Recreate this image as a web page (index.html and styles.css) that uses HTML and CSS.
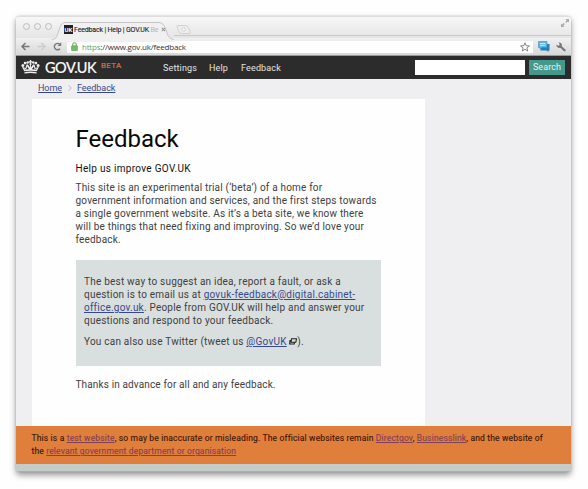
FILE: index.html
```html
<!DOCTYPE html>
<html lang="en">
<head>
<meta charset="utf-8">
<title>Feedback | Help | GOV.UK Beta</title>
<link rel="stylesheet" href="styles.css">
</head>
<body>
<div class="window">
  <div class="tabstrip">
    <div class="lights"><i></i><i></i><i></i></div>
    <div class="tab">
      <svg class="tab-shape" viewBox="0 0 126 20" width="126" height="20"><path d="M0 17.500C5 17 5 14 7 8C9 2 10 .5 14 .5H106C111 .5 112 3 114 8C116 14 117 17 122 17.500V20H0Z" fill="#f0f0f0"/><path d="M0 17.500C5 17 5 14 7 8C9 2 10 .5 14 .5H106C111 .5 112 3 114 8C116 14 117 17 122 17.500" fill="none" stroke="#c4c4c4"/></svg>
      <span class="favicon">UK</span>
      <span class="tab-title">Feedback | Help | GOV.UK <span class="faded">Be</span></span>
      <svg class="tab-close" viewBox="0 0 6 6" width="5" height="5"><path d="M1 1L5 5M5 1L1 5" stroke="#999" stroke-width="1.4"/></svg>
    </div>
    <svg class="newtab" viewBox="0 0 18 10" width="16" height="9"><path d="M1 1Q1 .5 2 .5H11Q13 .5 14 3L16 8Q16.500 9.500 15 9.500H6Q4 9.500 3 7Z" fill="#eee" stroke="#cdcdcd"/><path d="M8 2.800h1.500v1.500h1.500v1.500h-1.500v1.500h-1.500v-1.500h-1.500v-1.500h1.500z" fill="#fff" stroke="#c8c8c8" stroke-width=".6"/></svg>
    <svg class="expand" viewBox="0 0 8 8" width="8" height="8"><path d="M4.500 0H8V3.500L6.800 2.400L5.200 4L4.200 3L5.700 1.300ZM3.500 8H0V4.500L1.200 5.600L2.700 4L3.800 5L2.300 6.700Z" fill="#aaa"/></svg>
  </div>
  <div class="toolbar">
    <svg class="tool" viewBox="0 0 9 9" width="9" height="9"><path d="M8.500 4.500H1.500M4.500 1L1 4.500L4.500 8" fill="none" stroke="#777" stroke-width="1.500"/></svg>
    <svg class="tool" viewBox="0 0 9 9" width="9" height="9"><path d="M.5 4.500H7.500M4.500 1L8 4.500L4.500 8" fill="none" stroke="#ccc" stroke-width="1.500"/></svg>
    <svg class="tool" viewBox="0 0 9 9" width="9" height="9"><path d="M7 6.700A3.200 3.200 0 1 1 6.700 2.200" fill="none" stroke="#777" stroke-width="1.400"/><path d="M8.200 .3V4H4.500Z" fill="#777"/></svg>
    <div class="address">
      <svg class="lock" viewBox="0 0 7 9" width="7" height="9"><path d="M1.700 4V2.700a1.800 1.800 0 0 1 3.600 0V4" fill="none" stroke="#7fb476" stroke-width="1.200"/><rect x=".4" y="3.700" width="6.200" height="5" rx=".7" fill="#70bd65" stroke="#58a14f" stroke-width=".5"/></svg>
      <span class="url"><span class="scheme">https</span>://www.gov.uk/feedback</span>
      <svg class="star" viewBox="0 0 10 10" width="10" height="10"><path d="M5 .8L6.200 3.700L9.400 3.900L6.900 5.900L7.700 9L5 7.300L2.300 9L3.100 5.900L.6 3.900L3.800 3.700Z" fill="#fff" stroke="#777" stroke-width=".9"/></svg>
    </div>
    <svg class="chat" viewBox="0 0 12 11" width="12" height="11"><path d="M4 3h7.500v6.500h-1V11L8.500 9.500H2.500V6z" fill="#267fb6"/><path d="M.5 .5H9V6.500H4L2 8V6.500H.5z" fill="#5eb4e4" stroke="#398fc4" stroke-width=".6"/><path d="M2 2.500H7.500M2 4.300H7.500" stroke="#d9f1ff" stroke-width=".9"/></svg>
    <svg class="wrench" viewBox="0 0 10 10" width="10" height="10"><path d="M4.500 4.500L8.600 8.300" stroke="#777" stroke-width="2.200" stroke-linecap="round"/><path d="M2.500 .6A2.700 2.700 0 1 1 .6 2.500L2.400 3.900L3.800 2.500Z" fill="#777"/></svg>
  </div>
  <header class="masthead">
    <svg class="crown" viewBox="0 0 19 14" width="19" height="14"><g fill="#eee"><circle cx="1.900" cy="5.600" r="1.500"/><circle cx="4.100" cy="3.100" r="1.400"/><circle cx="6.700" cy="2.500" r="1.200"/><circle cx="12.300" cy="2.500" r="1.200"/><circle cx="14.900" cy="3.100" r="1.400"/><circle cx="17.100" cy="5.600" r="1.500"/><path d="M8.800 0h1.400v1.200h1.200v1.300h-1.200L10.500 5h-2L8.800 2.500H7.600V1.200h1.200z"/><path d="M1 7L2.500 7.200L4.500 8L5.500 4.500H7L9 7.500V4.500H10V7.500L12 4.500H13.500L14.500 8L16.500 7.200L18 7L15.700 11.300Q9.500 10.100 3.300 11.300Z"/><path d="M3.400 12.200Q9.500 11 15.600 12.200V13.600Q9.500 12.500 3.400 13.600Z"/></g><path d="M3.200 8.300L4.700 9.200L4.300 10.300ZM5.200 9.500L6.200 6.500L8 9.200ZM11 9.200L12.800 6.500L13.800 9.500ZM15.800 8.300L14.300 9.200L14.700 10.300Z" fill="#2c2c2d"/></svg>
    <span class="brand">GOV.UK</span>
    <span class="beta">BETA</span>
    <nav><a class="n1">Settings</a><a class="n2">Help</a><a>Feedback</a></nav>
    <span class="search-field"></span>
    <span class="search-button">Search</span>
  </header>
  <main>
    <div class="crumbs"><a>Home</a><svg viewBox="0 0 4 6" width="4" height="6"><path d="M.7 .5L3.200 3L.7 5.500" fill="none" stroke="#aaa" stroke-width=".8"/></svg><a>Feedback</a></div>
    <article>
      <h1>Feedback</h1>
      <h2>Help us improve GOV.UK</h2>
      <p>This site is an experimental trial (‘beta’) of a home for<br>government information and services, and the first steps towards<br>a single government website. As it’s a beta site, we know there<br>will be things that need fixing and improving. So we’d love your<br>feedback.</p>
      <div class="callout">
        <p>The best way to suggest an idea, report a fault, or ask a<br>question is to email us at <a>govuk-feedback@digital.cabinet-<br>office.gov.uk</a>. People from GOV.UK will help and answer your<br>questions and respond to your feedback.</p>
        <p>You can also use Twitter (tweet us <a>@GovUK</a> <svg class="ext" viewBox="0 0 8 7" width="8" height="7"><path d="M2.500 .8H7.500L6.800 4.300H2ZM2 2.500H1L.6 6H5.200L5.500 4.300" fill="none" stroke="#222" stroke-width="1.100"/></svg>).</p>
      </div>
      <p class="thanks">Thanks in advance for all and any feedback.</p>
    </article>
  </main>
  <footer>This is a <a>test website</a>, so may be inaccurate or misleading. The official websites remain <a>Directgov</a>, <a>Businesslink</a>, and the website of<br>the <a>relevant government department or organisation</a></footer>
  <div class="base"></div>
</div>
</body>
</html>
```
FILE: styles.css
```css
* { box-sizing: border-box; }
body { margin: 0; padding: 16px 0 0 16px; height: 489px; overflow: hidden; background: #fefefe; font-family: Roboto, "Liberation Sans", sans-serif; }
svg { display: block; flex: none; }
.window { width: 555px; height: 456px; border-radius: 4px; overflow: hidden; box-shadow: 0 0 1px #888, 0 3px 6px rgba(0,0,0,.42); display: flex; flex-direction: column; }
.tabstrip { height: 22px; flex: none; display: flex; position: relative; background: linear-gradient(#f7f7f7, #e5e5e5); border-top: 1px solid #dedede; padding-left: 7px; }
.tabstrip::after { content: ""; position: absolute; left: 158px; right: 0; bottom: 2px; height: 1px; background: #c9c9c9; }
.lights { display: flex; gap: 4px; padding-top: 6px; width: 30px; }
.lights i { width: 7px; height: 7px; border: 1px solid #bdbdbd; border-radius: 50%; background: #eee; }
.tab { width: 119px; display: flex; position: relative; align-items: center; padding: 4px 0 0 11px; }
.tab-shape { position: absolute; left: -1px; top: 5px; }
.favicon { position: relative; width: 9px; height: 9px; flex: none; background: #222; color: #fff; font-size: 6px; line-height: 10px; font-weight: 700; text-align: center; }
.tab-title { position: relative; font-size: 7px; letter-spacing: -.16px; margin-left: 1px; white-space: nowrap; color: #222; width: 87px; flex: none; -webkit-text-stroke: .1px; }
.faded { color: #bbb; }
.tab-close { position: relative; }
.newtab { margin: 8px 0 0 4px; position: relative; z-index: 1; }
.expand { margin: 2px 2px 0 auto; }
.toolbar { height: 18px; flex: none; display: flex; align-items: center; background: linear-gradient(#f0f0f0, #d8d8d8); border-bottom: 1px solid #999; padding: 0 5px; }
.tool { margin-right: 7px; }
.address { height: 12px; width: 483px; margin-left: -2px; background: #fff; display: flex; align-items: center; padding: 0 3px 0 4px; }
.url { font-family: "Open Sans", Roboto, sans-serif; font-size: 8px; line-height: 11px; margin: -1px 0 0 4px; color: #333; letter-spacing: -.2px; }
.scheme { color: #65a265; }
.star { margin-left: auto; }
.chat { margin-left: 5px; }
.wrench { margin-left: 6px; }
.masthead { height: 23px; flex: none; background: #2c2c2d; color: #e8e8e8; display: flex; align-items: center; padding-left: 5px; }
.crown { margin-top: -1px; }
.brand { font-family: Lato, sans-serif; font-size: 14.500px; line-height: 18px; width: 51px; margin: 0 5px; letter-spacing: -.5px; color: #fff; white-space: nowrap; -webkit-text-stroke: .2px; }
.beta { font-size: 8px; width: 22px; color: #d07349; letter-spacing: .3px; margin: -5px 0 0; -webkit-text-stroke: .2px; }
nav { display: flex; margin-left: 40px; width: 252px; font-size: 9px; letter-spacing: .15px; }
.n1 { width: 46px; } .n2 { width: 32px; }
.search-field { width: 110px; height: 15px; background: #fff; }
.search-button { width: 36px; height: 15px; margin-left: 4px; background: #45998c; color: #e5f5f1; font-size: 9px; line-height: 15px; text-align: center; letter-spacing: .1px; }
main { height: 347px; flex: none; background: #efeff1; padding: 0 0 0 16px; }
.crumbs { height: 20px; display: flex; align-items: center; padding: 0 0 2px 6px; font-size: 9px; gap: 5.500px; letter-spacing: -.05px; }
a { text-decoration: underline; color: #38488d; text-underline-offset: 1px; text-decoration-thickness: 1px; }
nav a { color: #e4e4e4; text-decoration: none; }
article { width: 393px; height: 327px; background: #fefefe; padding: 24px 0 0 43.500px; color: #404040; }
h1 { font-size: 24px; line-height: 32px; font-weight: 400; margin: 0; color: #080808; }
h2 { font-size: 10px; line-height: 13px; font-weight: 400; margin: 7px 0 5.500px; color: #111; letter-spacing: .3px; }
p { font-size: 10px; line-height: 13.100px; margin: 0; letter-spacing: .19px; white-space: nowrap; }
.callout { margin-top: 14px; width: 305.500px; height: 106px; background: #d9dfdf; padding: 15px 0 0 8.500px; }
.callout p { letter-spacing: .22px; }
.callout p + p { margin-top: 8px; }
.ext { display: inline-block; vertical-align: 0; }
.thanks { margin-top: 12px; letter-spacing: .14px; }
footer { height: 38px; flex: none; background: #e07e3b; color: #381507; font-size: 8.500px; line-height: 13px; padding: 6px 0 0 15.500px; letter-spacing: .16px; white-space: nowrap; -webkit-text-stroke: .1px; }
footer a { color: #823f55; }
.base { flex: 1; background: #c5cbc9; border-bottom: 1px solid #a9afad; }
```
